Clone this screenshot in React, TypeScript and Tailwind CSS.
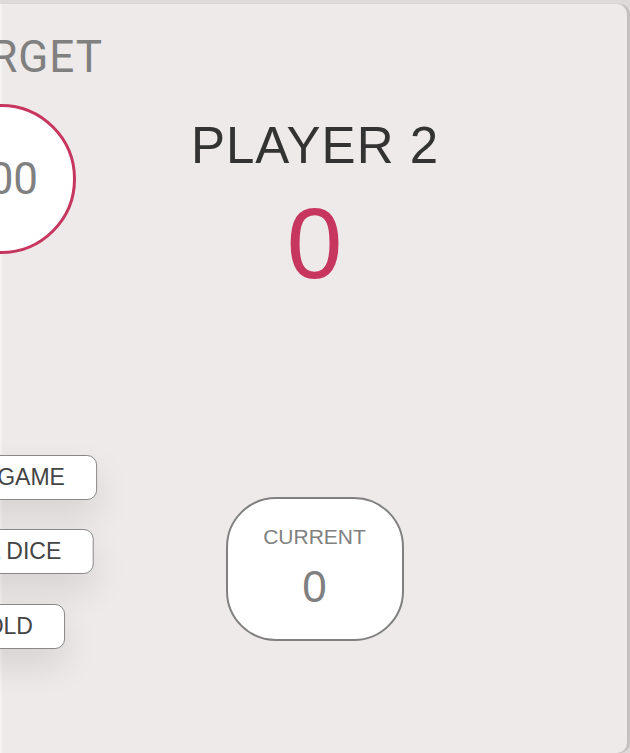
import React from 'react';

const App: React.FC = () => {
  return (
    <div className="h-[753px] w-[630px] overflow-hidden bg-[#dedad9] pt-[4px] font-['Liberation_Sans',Arial,sans-serif]">
      <main className="relative flex h-[749px] w-[627px] rounded-r-[10px] bg-[#eeeae9] shadow-[3px_0_1px_rgba(0,0,0,0.12)]">
        {/* Player 1 (active, mostly off screen) */}
        <section className="w-[2px] bg-white/40" />

        {/* Player 2 */}
        <section className="flex flex-1 flex-col items-center pt-[116px] pb-[112px]">
          <h2 className="pl-[1px] text-[51px] leading-none tracking-[1px] text-[#333]">PLAYER 2</h2>
          <p className="mt-[22px] text-[100px] leading-none text-[#c7365f]">0</p>
          <div className="mt-auto flex h-[144px] w-[178px] flex-col items-center rounded-[50px] border-2 border-[#808080] bg-white pt-[27px]">
            <p className="text-[21px] leading-none text-[#808080]">CURRENT</p>
            <p className="mt-[18px] text-[44px] leading-none text-[#808080]">0</p>
          </div>
        </section>

        {/* Target */}
        <p className="absolute right-[524px] top-[31px] whitespace-nowrap font-['Roboto',sans-serif] text-[44px] leading-none tracking-[1px] text-[#808080]">
          TARGET
        </p>
        <div className="absolute left-[1px] top-[100px] flex h-[150px] w-[150px] -translate-x-1/2 items-center justify-center rounded-full border-[3px] border-[#c7365f] bg-white">
          <span className="font-['Roboto',sans-serif] text-[44px] leading-none text-[#808080]">100</span>
        </div>

        {/* Buttons */}
        <button className="absolute left-[1px] top-[451px] h-[45px] -translate-x-1/2 whitespace-nowrap rounded-[10px] border border-[#888] bg-white px-[31px] text-[23px] leading-none text-[#444] shadow-[0_17px_35px_rgba(0,0,0,0.1)]">
          NEW GAME
        </button>
        <button className="absolute left-[1px] top-[525px] h-[45px] -translate-x-1/2 whitespace-nowrap rounded-[10px] border border-[#888] bg-white px-[31px] text-[23px] leading-none text-[#444] shadow-[0_17px_35px_rgba(0,0,0,0.1)]">
          ROLL DICE
        </button>
        <button className="absolute left-[1px] top-[600px] h-[45px] -translate-x-1/2 whitespace-nowrap rounded-[10px] border border-[#888] bg-white px-[31px] text-[23px] leading-none text-[#444] shadow-[0_17px_35px_rgba(0,0,0,0.1)]">
          HOLD
        </button>
      </main>
    </div>
  );
};

export default App;
